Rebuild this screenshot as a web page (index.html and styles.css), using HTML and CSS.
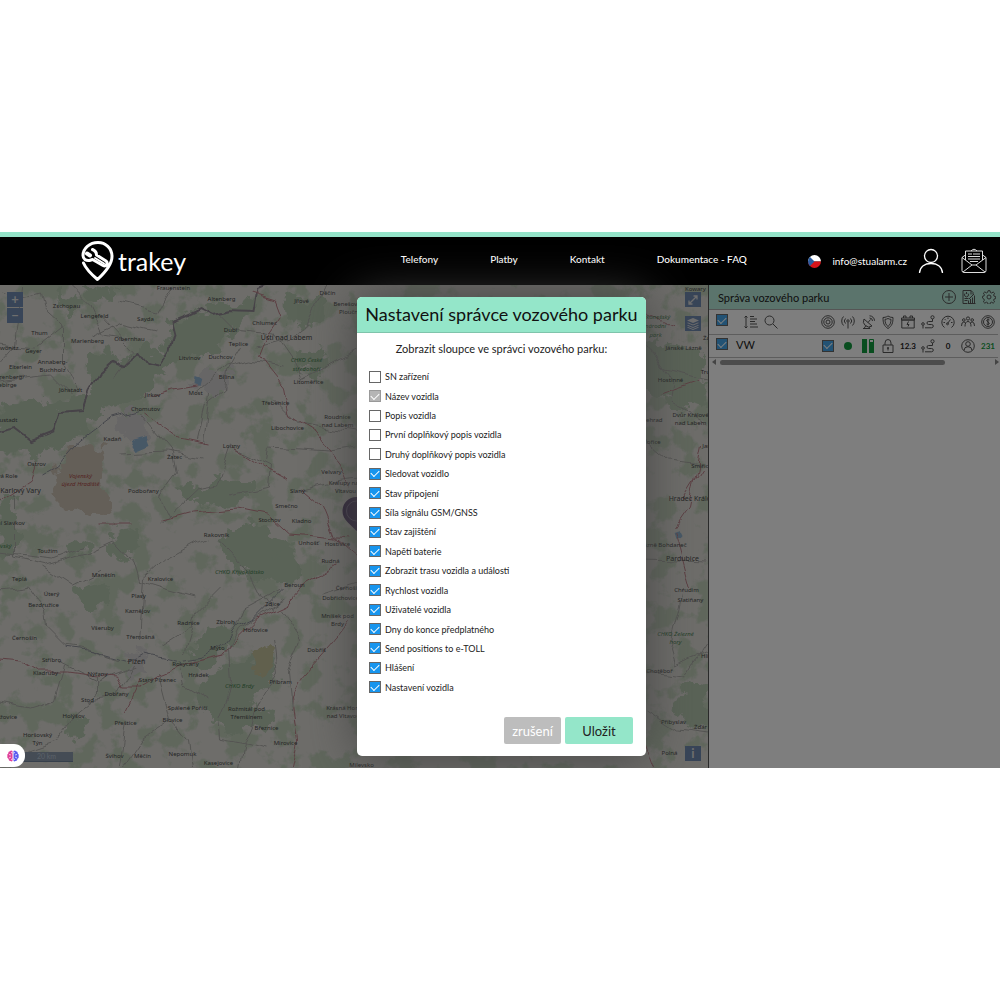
FILE: index.html
```html
<!DOCTYPE html>
<html lang="cs">
<head>
    <meta charset="UTF-8">
    <meta name="viewport" content="width=device-width, initial-scale=1.0">
    <title>Trakey</title>
    <link rel="stylesheet" href="styles.css">
</head>
<body>
    <div class="app">
        <header class="topbar">
            <a href="#" class="logo">
                <svg width="34" height="42" viewBox="0 0 34 42" fill="none" stroke="#fff" stroke-width="3" stroke-linecap="round" stroke-linejoin="round">
                    <path d="M2.500 23C5 29 10 34 16.500 39.500C24 32.500 31 25 31 16.500C31 8 24.500 2.500 17 2.500C8.500 2.500 2 8.500 2 15.500C2 19 5 21 8.500 20.500L11.500 19.500L22 25.500C25 27 27.500 23 25 21L15.500 15C15.500 12.500 14 10.500 11.500 9.500"/>
                    <path d="M6 13.500l3 2" stroke-width="4"/>
                    <path d="M14 18l9 5.500" stroke-width="2"/>
                </svg>
                <span>trakey</span>
            </a>
            <nav class="menu">
                <a href="#">Telefony</a>
                <a href="#">Platby</a>
                <a href="#">Kontakt</a>
                <a href="#">Dokumentace - FAQ</a>
            </nav>
            <div class="account">
                <svg width="13" height="13" viewBox="0 0 14 14">
                    <clipPath id="round"><circle cx="7" cy="7" r="7"/></clipPath>
                    <g clip-path="url(#round)">
                        <path fill="#fff" d="M0 0h14v7H0z"/>
                        <path fill="#d7141a" d="M0 7h14v7H0z"/>
                        <path fill="#2b5b9e" d="M0 0l7 7-7 7z"/>
                    </g>
                </svg>
                <a href="#" class="mail">info@stualarm.cz</a>
                <svg width="26" height="26" viewBox="0 0 26 26" fill="none" stroke="#fff" stroke-width="1.300">
                    <circle cx="13" cy="8" r="6.500"/>
                    <path d="M1.500 25C2 18.500 7 15.500 13 15.500S24 18.500 24.500 25"/>
                </svg>
                <svg class="envelope" width="26" height="26" viewBox="0 0 26 26" fill="none" stroke="#ddd" stroke-width="1">
                    <path d="M1 9.500v13q0 2 2 2h20q2 0 2-2v-13L21 6.500M5 6.500L1 9.500l10 7.500h4l10-7.500M2 24l9-7M24 24l-9-7M4.500 12V3h17v9M10 3q3-3.500 6 0"/>
                    <path d="M7 6h4M12 6h7M7 8.500h12M7 11h12M9 13.500h8" stroke-width="1.200"/>
                </svg>
            </div>
        </header>

        <main class="main">
            <section class="map">
                <svg class="mapCanvas" viewBox="0 285 709 483" preserveAspectRatio="xMidYMid slice">
                    <defs>
                        <filter id="woods" x="0" y="0" width="100%" height="100%" color-interpolation-filters="sRGB">
                            <feTurbulence type="fractalNoise" baseFrequency=".04" numOctaves="5" seed="8"/>
                            <feColorMatrix values="0 0 0 0 .73  0 0 0 0 .8  0 0 0 0 .7  9 0 0 0 -4.600"/>
                        </filter>
                        <filter id="rough" x="-5%" y="-5%" width="110%" height="110%">
                            <feTurbulence type="fractalNoise" baseFrequency=".07" numOctaves="4" seed="3"/>
                            <feDisplacementMap in="SourceGraphic" scale="26" xChannelSelector="R" yChannelSelector="G"/>
                        </filter>
                        <filter id="bends" x="-5%" y="-5%" width="110%" height="110%">
                            <feTurbulence type="fractalNoise" baseFrequency=".05" numOctaves="1" seed="3"/>
                            <feDisplacementMap in="SourceGraphic" scale="14" xChannelSelector="R" yChannelSelector="G"/>
                        </filter>
                    </defs>
                    <rect x="0" y="285" width="709" height="483" fill="#dcdad5"/>
                    <rect x="0" y="285" width="709" height="483" filter="url(#woods)" opacity=".8"/>
                    <!-- forests -->
                    <g class="forest" filter="url(#rough)">
                        <path d="M172 320l30-8 40-8 14-4-4 16-26 20-14 18-34 8-24 14-10 20-34 14-30 24-28 20-24-4-28 4V405l34-6 24 6 30-14 14-26 28-10 18-14 14 14 12-28z"/>
                        <path d="M110 350l12 16-26 12-14-14zM60 290l20 10-8 18-14-8zM80 285l40 4-8 12-26-2z"/>
                        <path d="M228 528l26-6 16 12 22 4-4 26-28 14-30-12-8-18z"/>
                        <path d="M176 485l30 2 8-14 26 6 18-2-6 20-34 8-30-6zM265 560l24-8 14 18-20 14-18-6z"/>
                        <path d="M196 640l20-14 16 4-6 24-16 14-22-6zM204 680l24-14 36-14 16 6-4 24-20 10-14 24-12 14-24-16-12-14z"/>
                        <path d="M60 545l28-6 8 14-30 6zM112 530l22-2 4 24-22 8zM72 588l34-4 4 20-30 4z"/>
                        <path d="M0 495l14 2 4 50-18 14zM0 422l40 10 20 10-14 14-46-2zM62 720l20-4 4 20-12 4z"/>
                        <path d="M642 340l60 10 6 60-30-4-36-20zM684 680l20 4 4 36-20 10-10-24z"/>
                        <path d="M222 700l22-2 30 12-4 14-44 8-14-12zM286 296l40 6-8 22-30 4zM294 345l34 6-6 24-24-4z"/>
                    </g>
                    <path class="military" filter="url(#rough)" d="M68 446l38 2 2 20-6 22 8 20-14 6-22-6-18-10-2-30z"/>
                    <path class="hills" filter="url(#rough)" d="M252 654l20-8 6 14-16 16-12-6z"/>
                    <path class="urban" filter="url(#rough)" d="M116 416l20-4 14 14-8 12-22-2zM192 380l30-12 14 6-10 22-24-4zM126 652l20 2 4 22-20-4z"/>
                    <path class="water" filter="url(#bends)" d="M131 440l18-4 3 8-14 6zM196 376l6 2-2 8-5-2zM674 530l6-2 4 8-8 3z"/>
                    <!-- minor roads -->
                    <g class="minor" filter="url(#bends)">
                        <path d="M0 290l20 8 22-6 4 18 18 16 0 36 14 30M24 285l-8 60-16 18M64 324l-30 24-34-4M70 285l20 20 14 30 24 4M92 337l30-14 34 8M0 380l50-6 20 20M172 288l-14 24-40-10M104 318l30 32-20 28"/>
                        <path d="M220 315l14 14 40 4 18 26 8 20M240 347l-14 24-2 20-18 14-8 34M258 347l30-8 18-14 12-24 10-16M300 380l58-30M276 400l24 24 60 10M196 392l30-26 26-6 30 6"/>
                        <path d="M205 443l6-50M140 414l34 40 4 20-18 24 10 20M120 454l48-2 34 6M232 447l-14 40-22 4-34 32M232 447l40 20-2 20-40 8M268 463l2-16 60 4 28-4M298 490l30-8 32-4"/>
                        <path d="M14 492l0 64 34 8 40-12 26-12 20 22 6 20 26 8 30 8M0 552l54 6 30-12M44 566l30 20 28-14M0 590l30-4 14 20 2 20 20 20 14 2 40 14M140 640l4-60 22-20 40-22"/>
                        <path d="M218 540l34 36 10 20 10 14M286 598l-46 30-10 20 2 34-14 36 2 22 50 10M236 628l8-20 38-20M280 610l20 30-12 30 4 40M322 595l38-12M274 640l4 34-18 30-16 40-4 24"/>
                        <path d="M60 662l40 20 36-14M98 674l0 20-22 18-20 28-30 10-26 30M88 700l30-4 16-30M126 723l-6 45M160 674l12 46 16 20 4 28M173 720l-30 20-20 30M0 702l30 6 26-8 10-34M180 664l4 20 26 16M196 622l-34 22M184 654l12-40 24-24"/>
                        <path d="M645 340l20 30 44 10M650 350l24 34-2 20 36 20M645 440l24 20 34 4M646 560l62 2M684 590l-4 20-10 40 4 14 36-14M646 672l40 4 22-34M646 710l30 20 32 4"/>
                    </g>
                    <!-- state border and motorways -->
                    <path class="border" filter="url(#bends)" d="M268 285l-12 5-4 22-20-1-18 4-12-6-12 6-18 7 3 12-4 18-10 15-14-3-8-12-16 14-8-4-14 12-10 18-6 18-26 2-6 20-20 8-16-12-18 4"/>
                    <path class="rail" filter="url(#bends)" d="M66 648l26 4 34 10 20-8 34 8 24-4 20-14 14-18 16-8 30-30M140 410l-28 8-32 24-22 26-14 8"/>
                    <g class="major" filter="url(#bends)">
                        <path d="M145 414l30 22 34 7M236 449l30 20 22 12M152 396l20-6 26-4M250 292l26 8 6 16-14 20-8 20 24 30 6 30 26 16 24 32 12 26"/>
                        <path d="M162 520l30-8 46-4 30 6 22 20 60 5M300 488l24 20 12 30 24 20M0 660l22 2 16 10 30 0 30 4 20 2 6 10 16 0 20-12 30-12 34-8 14-18 20-20 30-14 16-18 34-20"/>
                        <path d="M0 500l30-20 6-18M100 524l34 0M350 620l-18 24-30 34-10 20 6 42-6 28M140 680l-14 30M702 446l-12 60-14 20M683 500l20-32M640 310l34 16M700 380l-40 14M676 530l16 60M646 740l10 28"/>
                    </g>
                    <!-- place names -->
                    <g class="places">
                        <text x="174" y="290">Frauenstein</text>
                        <text x="222" y="301">Altenberg</text>
                        <text x="302" y="303">Jílové</text>
                        <text x="328" y="295">Děčín</text>
                        <text x="352" y="306">Benešov nad</text>
                        <text x="352" y="314">Ploučnicí</text>
                        <text x="67" y="308">Zschopau</text>
                        <text x="95" y="318">Lengefeld</text>
                        <text x="146" y="321">Sayda</text>
                        <text x="265" y="325">Chlumec</text>
                        <text x="231" y="332">Dubí</text>
                        <text x="239" y="346">Teplice</text>
                        <text x="40" y="335">Thum</text>
                        <text x="34" y="353">Geyer</text>
                        <text x="8" y="350">Zwönitz</text>
                        <text x="88" y="343">Marienberg</text>
                        <text x="130" y="341">Olbernhau</text>
                        <text x="190" y="360">Litvinov</text>
                        <text x="221" y="359">Duchcov</text>
                        <text x="227" y="379">Bílina</text>
                        <text x="21" y="369">Elterlein</text>
                        <text x="53" y="364">Annaberg-</text>
                        <text x="53" y="372">Buchholz</text>
                        <text x="2" y="379">Schwarzenberg/</text>
                        <text x="2" y="387">Erzgebirge</text>
                        <text x="71" y="392">Jöhstadt</text>
                        <text x="153" y="397">Jirkov</text>
                        <text x="196" y="395">Most</text>
                        <text x="309" y="384">Litoměřice</text>
                        <text x="276" y="405">Třebenice</text>
                        <text x="146" y="411">Chomutov</text>
                        <text x="338" y="419">Roudnice</text>
                        <text x="338" y="427">nad Labem</text>
                        <text x="5" y="422">Neustadt</text>
                        <text x="288" y="430">Libochovice</text>
                        <text x="113" y="441">Kadaň</text>
                        <text x="232" y="448">Louny</text>
                        <text x="175" y="459">Žatec</text>
                        <text x="37" y="466">Ostrov</text>
                        <text x="332" y="474">Velvary</text>
                        <text x="346" y="485">Kralupy nad</text>
                        <text x="346" y="493">Vltavou</text>
                        <text x="4" y="478">Nová Role</text>
                        <text x="144" y="493">Podbořany</text>
                        <text x="298" y="493">Slaný</text>
                        <text x="287" y="508">Smečno</text>
                        <text x="270" y="522">Stochov</text>
                        <text x="302" y="523">Kladno</text>
                        <text x="6" y="525">Horní Slavkov</text>
                        <text x="217" y="537">Rakovník</text>
                        <text x="309" y="545">Unhošť</text>
                        <text x="338" y="546">Hostivice</text>
                        <text x="48" y="553">Toužim</text>
                        <text x="331" y="563">Rudná</text>
                        <text x="104" y="577">Manětín</text>
                        <text x="20" y="581">Teplá</text>
                        <text x="161" y="581">Kralovice</text>
                        <text x="295" y="587">Beroun</text>
                        <text x="52" y="596">Úterý</text>
                        <text x="44" y="607">Bezdružice</text>
                        <text x="139" y="598">Plasy</text>
                        <text x="138" y="613">Kaznějov</text>
                        <text x="273" y="606">Zdice</text>
                        <text x="350" y="590">Černošice</text>
                        <text x="341" y="600">Dobřichovice</text>
                        <text x="338" y="618">Mníšek pod</text>
                        <text x="338" y="626">Brdy</text>
                        <text x="189" y="625">Radnice</text>
                        <text x="226" y="624">Zbiroh</text>
                        <text x="103" y="630">Všeruby</text>
                        <text x="256" y="632">Hořovice</text>
                        <text x="25" y="640">Černošín</text>
                        <text x="141" y="639">Třemošná</text>
                        <text x="218" y="650">Mýto</text>
                        <text x="317" y="652">Dobříš</text>
                        <text x="52" y="662">Stříbro</text>
                        <text x="186" y="666">Rokycany</text>
                        <text x="46" y="675">Kladruby</text>
                        <text x="98" y="676">Nýřany</text>
                        <text x="199" y="677">Hrádek</text>
                        <text x="158" y="682">Starý Plzenec</text>
                        <text x="281" y="684">Příbram</text>
                        <text x="117" y="696">Dobřany</text>
                        <text x="88" y="702">Stod</text>
                        <text x="188" y="710">Spálené Poříčí</text>
                        <text x="247" y="711">Rožmitál pod</text>
                        <text x="247" y="719">Třemšínem</text>
                        <text x="344" y="710">Krásná Hora</text>
                        <text x="344" y="718">nad Vltavou</text>
                        <text x="2" y="719">Poběžovice</text>
                        <text x="74" y="718">Holýšov</text>
                        <text x="173" y="722">Blovice</text>
                        <text x="126" y="725">Přeštice</text>
                        <text x="267" y="730">Březnice</text>
                        <text x="38" y="737">Horšovský</text>
                        <text x="38" y="745">Týn</text>
                        <text x="286" y="745">Mirovice</text>
                        <text x="115" y="758">Švihov</text>
                        <text x="143" y="758">Měčín</text>
                        <text x="183" y="756">Nepomuk</text>
                        <text x="219" y="765">Kasejovice</text>
                        <text x="362" y="767">Milevsko</text>
                        <text x="696" y="291">Kowary</text>
                        <text x="684" y="350">Jánské Lázně</text>
                        <text x="712" y="340">Žacléř</text>
                        <text x="712" y="374">Trutnov</text>
                        <text x="671" y="382">Hostinné</text>
                        <text x="650" y="422">Vyšehrad</text>
                        <text x="691" y="417">Dvůr Králové</text>
                        <text x="691" y="425">nad Labem</text>
                        <text x="652" y="444">Hořice</text>
                        <text x="714" y="448">Jaroměř</text>
                        <text x="702" y="468">Smiřice</text>
                        <text x="664" y="547">Lázně Bohdaneč</text>
                        <text x="687" y="592">Chrudim</text>
                        <text x="691" y="602">Slatiňany</text>
                        <text x="712" y="658">Hlinsko</text>
                        <text x="660" y="673">Chotěboř</text>
                        <text x="674" y="724">Přibyslav</text>
                        <text x="701" y="729">Žďár</text>
                        <text x="670" y="755">Polná</text>
                    </g>
                    <g class="places cities">
                        <text x="287" y="340">Ústí nad Labem</text>
                        <text x="21" y="493">Karlovy Vary</text>
                        <text x="137" y="664">Plzeň</text>
                        <text x="694" y="501">Hradec Králové</text>
                        <text x="683" y="561">Pardubice</text>
                    </g>
                    <g class="places parks">
                        <text x="307" y="362">CHKO České</text>
                        <text x="307" y="371">středohoří</text>
                        <text x="240" y="574">CHKO Křivoklátsko</text>
                        <text x="240" y="688">CHKO Brdy</text>
                        <text x="-2" y="548">Slavkovský</text>
                        <text x="656" y="319">Krkonošský</text>
                        <text x="656" y="328">národní</text>
                        <text x="656" y="337">park</text>
                        <text x="676" y="636">CHKO Železné</text>
                        <text x="676" y="644">hory</text>
                    </g>
                    <g class="places army">
                        <text x="81" y="478">Vojenský</text>
                        <text x="81" y="486">újezd Hradiště</text>
                    </g>
                    <!-- vehicle pin -->
                    <path fill="#5e4a72" d="M357 497a14 14 0 0 0-14 14c0 9 8 13 14 20 6-7 14-11 14-20a14 14 0 0 0-14-14z"/>
                    <circle cx="357" cy="511" r="10" fill="none" stroke="#8f80a0"/>
                </svg>
                <div class="zoomBox">
                    <button aria-label="Přiblížit">+</button>
                    <button aria-label="Oddálit">−</button>
                </div>
                <div class="toolBox">
                    <button aria-label="Celá obrazovka">
                        <svg width="10" height="10" viewBox="0 0 10 10" fill="none" stroke="#ddd" stroke-width="1.300"><path d="M1 9l8-8M5.500 1H9v3.500M1 5.500V9h3.500"/></svg>
                    </button>
                    <button aria-label="Vrstvy">
                        <svg width="12" height="12" viewBox="0 0 12 12" fill="#ddd"><path d="M6 0l6 2.500-6 2.500-6-2.500zM0 5l1-.5 5 2 5-2 1 .5-6 2.500zM0 7.500l1-.5 5 2 5-2 1 .5L6 10zM0 9.500l1-.5 5 2 5-2 1 .5-6 2.500z"/></svg>
                    </button>
                </div>
                <button class="infoButton" aria-label="Informace">i</button>
                <div class="scale">20 km</div>
            </section>

            <aside class="fleet">
                <div class="fleetHead">
                    <h2>Správa vozového parku</h2>
                    <svg class="icon" viewBox="0 0 14 14"><circle cx="7" cy="7" r="6.500"/><path d="M7 3v8M3 7h8"/></svg>
                    <svg class="icon" viewBox="0 0 14 14"><path d="M5 13.500H1V.5h8v4M9 .5l2 2v2M3 3.500a2 2 0 1 0 3 0M4.500 2v2M2.500 8.500h4M2.500 10.500h3M6.500 13.500v-3M8.500 13.500V9M10.500 13.500V7.500M12.500 13.500V5.500M5.500 13.500h8M7 9l5-5"/></svg>
                    <svg class="icon" viewBox="0 0 14 14"><circle cx="7" cy="7" r="2"/><path d="M6 .7h2l.4 1.800 1.200.5 1.600-1 1.400 1.400-1 1.600.5 1.200 1.600.4v2l-1.600.4-.5 1.200 1 1.600-1.400 1.400-1.600-1-1.200.5-.4 1.600H6l-.4-1.600-1.200-.5-1.600 1-1.400-1.400 1-1.600-.5-1.200L.4 8V6.400l1.500-.4.5-1.200-1-1.600L2.800 1.900l1.600 1 1.200-.5z"/></svg>
                </div>
                <table class="fleetTable">
                    <thead>
                        <tr>
                            <th class="pick"><input type="checkbox" class="box" aria-label="Vybrat vše" checked></th>
                            <th class="name">
                                <svg class="icon" viewBox="0 0 14 14"><path d="M2 1v12M.5 2.500L2 1l1.500 1.500M.5 11.500L2 13l1.500-1.500M6 1.500h4M6 4h7M6 6.500h5M6 9h7M6 12h8"/></svg>
                                <svg class="icon" viewBox="0 0 14 14"><circle cx="5.500" cy="5.500" r="4.500"/><path d="M9 9l4.500 4.500"/></svg>
                            </th>
                            <th><svg class="icon" viewBox="0 0 14 14"><circle cx="7" cy="7" r="6.300"/><circle cx="7" cy="7" r="4.200"/><circle cx="7" cy="7" r="2"/></svg></th>
                            <th><svg class="icon" viewBox="0 0 14 14"><circle cx="7" cy="6" r="1.200"/><path d="M7 7.500v6M4.500 8.500a3.500 3.500 0 0 1 0-5M9.500 8.500a3.500 3.500 0 0 0 0-5M2.500 10.500a6.500 6.500 0 0 1 0-9M11.500 10.500a6.500 6.500 0 0 0 0-9"/></svg></th>
                            <th><svg class="icon" viewBox="0 0 14 14"><path d="M3 4a5.500 5.500 0 0 0 8 7zM7 7.500l2.500-3M2 13.500h7M5 10.500l-2 3M8 12l1 1.500M8.500 3a3 3 0 0 1 3 3M8.500.8a5 5 0 0 1 5 5"/></svg></th>
                            <th><svg class="icon" viewBox="0 0 14 14"><path d="M7 1q2 1.500 5 1.500C12 8 11 11 7 13.500 3 11 2 8 2 2.500 5 2.500 7 1 7 1zM7 3.500q1.500.8 3 .8C10 8 9 10 7 11.500 5 10 4 8 4 4.300q1.500 0 3-.8z"/></svg></th>
                            <th><svg class="icon" viewBox="0 0 14 14"><path d="M.8 5h12.400v8H.8zM.5 3h13v2H.5zM2.500 3V1h2.500v2M9 3V1h2.500v2M7.500 6.500l-1.500 3h2l-1 2"/></svg></th>
                            <th><svg class="icon" viewBox="0 0 14 14"><circle cx="2" cy="9" r="1.300"/><circle cx="11.500" cy="2.300" r="1.600"/><path d="M2 10.500v3M11.500 4v2.500H7.500q-1.500 0-1.500 1.500t1.500 1.500h3q1.800 0 1.800 1.600T10.500 12.800H4"/></svg></th>
                            <th><svg class="icon" viewBox="0 0 14 14"><path d="M3.500 12.500a6.200 6.200 0 1 1 7 0M6.500 8.500L9.500 4.500M2.500 7.500H4M7 2.500V4M11.500 7.500H10M3.800 4.200l1 1"/><circle cx="6.500" cy="8.800" r="1"/></svg></th>
                            <th><svg class="icon" viewBox="0 0 14 14"><circle cx="7" cy="3.500" r="1.600"/><circle cx="2.800" cy="5" r="1.300"/><circle cx="11.200" cy="5" r="1.300"/><path d="M4 11.500q0-5 3-5t3 5M.5 11q0-4 2.300-4l1.500.5M13.500 11q0-4-2.300-4l-1.500.5"/></svg></th>
                            <th><svg class="icon" viewBox="0 0 14 14"><circle cx="7" cy="7" r="6.300"/><circle cx="7" cy="7" r="4.500"/><path d="M8.500 5Q7 4 6 5t1 2 1 2-2.500 0M7 3.500v7"/></svg></th>
                        </tr>
                    </thead>
                    <tbody>
                        <tr>
                            <td class="pick"><input type="checkbox" class="box" aria-label="Vybrat VW" checked></td>
                            <td class="name">VW</td>
                            <td><input type="checkbox" class="box" aria-label="Sledovat VW" checked></td>
                            <td><span class="dot"></span></td>
                            <td><svg width="12" height="14" viewBox="0 0 12 14"><path fill="#139a3e" d="M0 0h5v14H0zM7 3h5v11H7z"/><path fill="none" stroke="#139a3e" d="M7.500 .5h4v3h-4z"/></svg></td>
                            <td><svg class="icon" viewBox="0 0 14 14"><path d="M2 6h10v7.500H2zM4 6V4q0-3.500 3-3.500T10 4v2M7 9v2.500"/><circle cx="7" cy="9" r=".7"/></svg></td>
                            <td>12.3</td>
                            <td><svg class="icon" viewBox="0 0 14 14"><circle cx="2" cy="9" r="1.300"/><circle cx="11.500" cy="2.300" r="1.600"/><path d="M2 10.500v3M11.500 4v2.500H7.500q-1.500 0-1.500 1.500t1.500 1.500h3q1.800 0 1.800 1.600T10.500 12.800H4"/></svg></td>
                            <td>0</td>
                            <td><svg class="icon" viewBox="0 0 14 14"><circle cx="7" cy="7" r="6.300"/><circle cx="7" cy="5" r="2.300"/><path d="M3 11.500q0-3.800 4-3.800t4 3.800"/></svg></td>
                            <td class="days">231</td>
                        </tr>
                    </tbody>
                </table>
                <div class="scrollbar"><i></i><span></span><i class="right"></i></div>
            </aside>

            <div class="overlay">
                <form class="modal">
                    <h1>Nastavení správce vozového parku</h1>
                    <p>Zobrazit sloupce ve správci vozového parku:</p>
                    <div class="columns">
                        <label><input type="checkbox" class="box"> SN zařízení</label>
                        <label><input type="checkbox" class="box" checked disabled> Název vozidla</label>
                        <label><input type="checkbox" class="box"> Popis vozidla</label>
                        <label><input type="checkbox" class="box"> První doplňkový popis vozidla</label>
                        <label><input type="checkbox" class="box"> Druhý doplňkový popis vozidla</label>
                        <label><input type="checkbox" class="box" checked> Sledovat vozidlo</label>
                        <label><input type="checkbox" class="box" checked> Stav připojení</label>
                        <label><input type="checkbox" class="box" checked> Síla signálu GSM/GNSS</label>
                        <label><input type="checkbox" class="box" checked> Stav zajištění</label>
                        <label><input type="checkbox" class="box" checked> Napětí baterie</label>
                        <label><input type="checkbox" class="box" checked> Zobrazit trasu vozidla a události</label>
                        <label><input type="checkbox" class="box" checked> Rychlost vozidla</label>
                        <label><input type="checkbox" class="box" checked> Uživatelé vozidla</label>
                        <label><input type="checkbox" class="box" checked> Dny do konce předplatného</label>
                        <label><input type="checkbox" class="box" checked> Send positions to e-TOLL</label>
                        <label><input type="checkbox" class="box" checked> Hlášení</label>
                        <label><input type="checkbox" class="box" checked> Nastavení vozidla</label>
                    </div>
                    <div class="buttons">
                        <button type="reset" class="cancel">zrušení</button>
                        <button type="submit" class="save">Uložit</button>
                    </div>
                </form>
            </div>

            <button class="assistant" aria-label="Asistent">
                <svg width="12" height="12" viewBox="0 0 12 12">
                    <path fill="#e0409a" d="M5.500 1Q4-.2 3 1.200 1 1.500 1.300 3.500-.3 4.500.5 6-.3 8 1.500 8.800 1.500 11 3.500 11q1.500 1 2-.3z"/>
                    <path fill="#5a5cf0" d="M6.500 1Q8-.2 9 1.200q2 .3 1.700 2.300 1.600 1 .8 2.500.8 2-1 2.800 0 2.200-2 2.200-1.500 1-2-.3z"/>
                    <path fill="none" stroke="#fff" stroke-width=".7" d="M2 4.500l2 .5M2 8l2-1M10 4.500L8 5M10 8L8 7M5.500 3L4 2.500M6.500 3L8 2.500M5.500 9L4 9.500M6.500 9l1.500.5"/>
                </svg>
            </button>
        </main>
    </div>
</body>
</html>
```
FILE: styles.css
```css
* {
    box-sizing: border-box;
    margin: 0;
    padding: 0;
}
body {
    min-height: 100vh;
    display: flex;
    align-items: center;
    background-color: #fff;
    font-family: "Century Gothic", Lato, sans-serif;
    color: #222;
}
button, input {
    font-family: inherit;
    border: 0;
}
.app {
    width: 100%;
    overflow: hidden;
}

/* top bar */
.topbar {
    display: grid;
    grid-template-columns: 40% 1fr auto;
    align-items: center;
    height: 53px;
    padding-right: 13px;
    border-top: 5px solid #94e3c8;
    background-color: #000;
}
.topbar a {
    color: #fff;
    text-decoration: none;
}
.logo {
    display: flex;
    align-items: center;
    gap: 3px;
    padding-left: 81px;
    font-size: 25px;
}
.menu {
    display: flex;
    gap: 52px;
    padding: 0 0 4px 6px;
    font-size: 10px;
    font-weight: 500;
}
.account {
    display: flex;
    align-items: center;
    gap: 11px;
}
.mail {
    font-size: 10px;
}
.envelope {
    margin-left: 6px;
}

/* map */
.main {
    position: relative;
    display: grid;
    grid-template-columns: 1fr 292px;
}
.map {
    grid-area: 1 / 1;
    position: relative;
    overflow: hidden;
}
.mapCanvas {
    position: absolute;
    width: 100%;
    height: 100%;
}
.forest {
    fill: #b4c6af;
}
.military {
    fill: #c9bfb0;
}
.hills {
    fill: #c3c09a;
}
.urban {
    fill: #cfcccd;
}
.water {
    fill: #8fb0cc;
}
.minor, .major, .border, .rail {
    fill: none;
    stroke: #a9a8a4;
    stroke-width: 1;
}
.major {
    stroke: #b97f86;
}
.border {
    stroke: #8f8690;
    stroke-width: 2;
}
.rail {
    stroke: #8d8f98;
}
.places {
    font: 6px "Noto Sans", sans-serif;
    text-anchor: middle;
    fill: #4a4a4a;
}
.cities {
    font-size: 7px;
}
.parks {
    font-style: italic;
    fill: #4a8050;
}
.army {
    font-style: italic;
    fill: #a84848;
}
.map button {
    display: flex;
    align-items: center;
    justify-content: center;
    width: 16px;
    height: 15px;
    background-color: #708ab0;
    color: #ddd;
    font-size: 13px;
    font-weight: bold;
    line-height: 15px;
}
.zoomBox, .toolBox {
    position: absolute;
    top: 7px;
    left: 7px;
    display: grid;
    gap: 1px;
}
.toolBox {
    left: auto;
    right: 7px;
    gap: 9px;
}
.map .infoButton {
    position: absolute;
    right: 7px;
    bottom: 7px;
}
.scale {
    position: absolute;
    left: 20px;
    bottom: 6px;
    width: 53px;
    height: 10px;
    background-color: #8a99ab;
    color: #b8c4d2;
    font-size: 7px;
    line-height: 9px;
    text-align: center;
    border-bottom: 1px solid #6d7f97;
}

/* fleet panel */
.fleet {
    grid-area: 1 / 2;
    border-left: 1px solid #555;
    background-color: #fcfcfc;
}
.fleetHead {
    display: flex;
    align-items: center;
    gap: 6px;
    height: 25px;
    padding: 0 4px 0 9px;
    background-color: #b6e8d8;
    border-bottom: 1px solid #aaa;
}
.fleetHead h2 {
    flex: 1;
    font-size: 11px;
    font-weight: normal;
}
.icon {
    width: 14px;
    height: 14px;
    fill: none;
    stroke: #555;
    stroke-width: 1;
}
.fleetTable {
    width: 289px;
    table-layout: fixed;
    border-collapse: collapse;
}
.fleetTable th, .fleetTable td {
    width: 20px;
    height: 24px;
    border-bottom: 1px solid #bbb;
    font-size: 8px;
    font-weight: bold;
    text-align: center;
    vertical-align: middle;
}
.fleetTable td {
    height: 23px;
}
.fleetTable svg, .fleetTable input {
    vertical-align: middle;
}
.fleetTable .pick {
    width: 25px;
    padding-bottom: 3px;
}
.fleetTable .name {
    width: auto;
    padding-left: 2px;
    font-size: 11px;
    font-weight: normal;
    text-align: left;
}
.fleetTable td.name {
    padding-bottom: 2px;
}
.fleetTable th.name {
    padding-left: 10px;
}
.fleetTable .name .icon {
    margin-right: 3px;
}
.fleetTable .days {
    color: #139a3e;
}
.dot {
    display: inline-block;
    width: 8px;
    height: 8px;
    border-radius: 50%;
    background-color: #139a3e;
    vertical-align: middle;
}
.scrollbar {
    display: flex;
    align-items: center;
    justify-content: space-between;
    height: 9px;
    padding: 0 1px 0 3px;
}
.scrollbar span {
    flex: 1;
    height: 5px;
    margin: 0 50px 0 4px;
    border-radius: 3px;
    background-color: #999;
}
.scrollbar i {
    border: 3px solid transparent;
    border-left: 0;
    border-right: 4px solid #888;
}
.scrollbar .right {
    border-right: 0;
    border-left: 4px solid #888;
}

/* checkbox */
.box {
    appearance: none;
    display: inline-grid;
    place-content: center;
    width: 12px;
    height: 12px;
    border: 1px solid #666;
    background-color: #fff;
}
.box:checked {
    background-color: #1795ee;
}
.fleet .box:checked {
    background-color: #45a5e8;
}
.box:checked:disabled {
    background-color: #b5b5b5;
    border-color: #999;
}
.box:checked::before {
    content: "";
    width: 7px;
    height: 4px;
    margin-bottom: 2px;
    border-left: 1px solid #fff;
    border-bottom: 1px solid #fff;
    transform: rotate(-45deg);
}

/* dialog */
.overlay {
    position: relative;
    z-index: 1;
    grid-area: 1 / 1 / 2 / 3;
    display: flex;
    justify-content: center;
    padding: 12px 0 12px 3px;
    background-color: rgba(0, 0, 0, 0.5);
}
.modal {
    display: flex;
    flex-direction: column;
    width: 289px;
    height: 459px;
    border-radius: 5px;
    background-color: #fff;
    box-shadow: 0 0 50px #444;
}
.modal h1 {
    height: 36px;
    border-bottom: 1px solid #7fc4ab;
    border-radius: 5px 5px 0 0;
    background-color: #94e6c9;
    color: #111;
    font-size: 18px;
    font-weight: normal;
    line-height: 35px;
    text-align: center;
}
.modal p {
    padding-top: 8px;
    font-size: 11px;
    line-height: 16px;
    text-align: center;
}
.columns {
    flex: 1;
    display: grid;
    grid-auto-rows: 1fr;
    padding: 10px 12px 20px;
}
.columns label {
    display: flex;
    align-items: center;
    gap: 4px;
    font-size: 9px;
}
.buttons {
    display: flex;
    justify-content: flex-end;
    gap: 4px;
    padding: 0 13px 12px;
}
.buttons button {
    height: 27px;
    border-radius: 2px;
    font-size: 13px;
}
.cancel {
    width: 57px;
    background-color: #bdbdbd;
    color: #fff;
}
.save {
    width: 68px;
    background-color: #94e6c9;
    color: #222;
}

/* assistant tab */
.assistant {
    position: absolute;
    z-index: 2;
    left: 0;
    bottom: 1px;
    display: flex;
    align-items: center;
    width: 25px;
    height: 23px;
    padding-left: 7px;
    border-radius: 0 11px 11px 0;
    background-color: #fff;
}
```
